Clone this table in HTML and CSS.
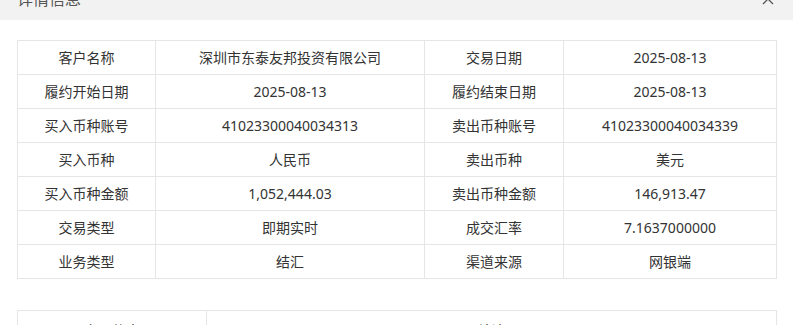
FILE: index.html
```html
<!DOCTYPE html>
<html lang="zh-CN">
<head>
<meta charset="utf-8">
<title>详情信息</title>
<link rel="stylesheet" href="styles.css">
</head>
<body>
<div class="modal">
  <div class="modal-header">
    <span class="modal-title">详情信息</span>
    <span class="modal-close">
      <svg width="12" height="12" viewBox="0 0 12 12"><path d="M1 1 L11 11 M11 1 L1 11" stroke="#555" stroke-width="1.3" fill="none"/></svg>
    </span>
  </div>
  <div class="modal-body">
    <table class="detail">
      <colgroup><col class="c1"><col class="c2"><col class="c3"><col class="c4"></colgroup>
      <tr><td>客户名称</td><td>深圳市东泰友邦投资有限公司</td><td>交易日期</td><td>2025-08-13</td></tr>
      <tr><td>履约开始日期</td><td>2025-08-13</td><td>履约结束日期</td><td>2025-08-13</td></tr>
      <tr><td>买入币种账号</td><td>41023300040034313</td><td>卖出币种账号</td><td>41023300040034339</td></tr>
      <tr><td>买入币种</td><td>人民币</td><td>卖出币种</td><td>美元</td></tr>
      <tr><td>买入币种金额</td><td>1,052,444.03</td><td>卖出币种金额</td><td>146,913.47</td></tr>
      <tr><td>交易类型</td><td>即期实时</td><td>成交汇率</td><td>7.1637000000</td></tr>
      <tr><td>业务类型</td><td>结汇</td><td>渠道来源</td><td>网银端</td></tr>
    </table>
    <table class="detail second">
      <colgroup><col class="d1"><col class="d2"></colgroup>
      <tr><td>交易状态</td><td>结清</td></tr>
    </table>
  </div>
</div>
</body>
</html>
```
FILE: styles.css
```css
html, body {
  margin: 0;
  padding: 0;
  background: #ffffff;
  overflow: hidden;
}
body {
  font-family: "Noto Sans", "Noto Sans CJK SC", sans-serif;
  color: #333333;
  font-size: 14px;
}
.modal {
  margin-top: -22px;
}
.modal-header {
  height: 42px;
  background: #f2f2f2;
  display: flex;
  align-items: center;
  justify-content: space-between;
  padding: 0 19px 0 17px;
}
.modal-title {
  font-size: 16px;
  color: #555555;
  line-height: 22px;
}
.modal-close {
  display: flex;
  width: 12px;
  height: 12px;
}
.modal-body {
  padding: 20px 16px 0 17px;
}
.detail {
  width: 100%;
  border-collapse: collapse;
  table-layout: fixed;
}
.detail td {
  border: 1px solid #e6e6e6;
  height: 33px;
  padding: 0;
  text-align: center;
  font-size: 14px;
  line-height: 20px;
  color: #333333;
}
.c1 { width: 138px; }
.c2 { width: 269px; }
.c3 { width: 139px; }
.c4 { width: auto; }
.second {
  margin-top: 31px;
}
.second td {
  height: 39px;
}
.d1 { width: 189px; }
.d2 { width: auto; }
```
